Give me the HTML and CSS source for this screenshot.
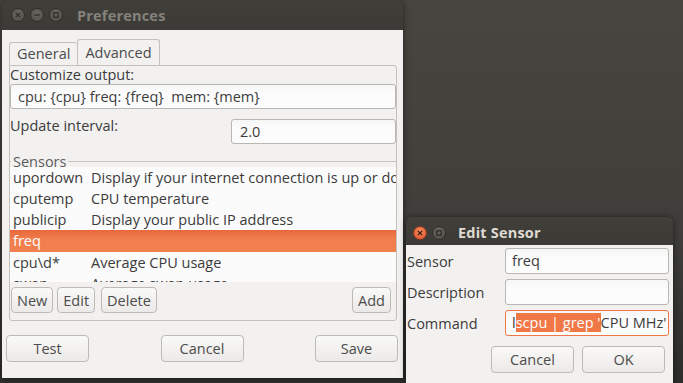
FILE: index.html
```html
<!DOCTYPE html>
<html>
<head>
<meta charset="utf-8">
<link rel="stylesheet" href="styles.css">
</head>
<body>
<div class="desktop">
  <div class="window prefs">
    <div class="titlebar">
      <div class="wbtns">
        <span class="wb"><svg viewBox="0 0 14 14"><path d="M4.5 4.5l5 5M9.5 4.5l-5 5"/></svg></span>
        <span class="wb"><svg viewBox="0 0 14 14"><path d="M4 7h6"/></svg></span>
        <span class="wb"><svg viewBox="0 0 14 14"><rect x="4.5" y="4.5" width="5" height="5"/></svg></span>
      </div>
      <div class="title">Preferences</div>
    </div>
    <div class="body">
      <div class="tabs">
        <div class="tab">General</div>
        <div class="tab active">Advanced</div>
      </div>
      <div class="panel">
        <div class="label">Customize output:</div>
        <div class="entry wide">cpu: {cpu} freq: {freq}&nbsp; mem: {mem}</div>
        <div class="interval">
          <span class="label">Update interval:</span>
          <div class="entry spin">2.0</div>
        </div>
        <div class="frame">
          <div class="legend"><span>Sensors</span></div>
          <div class="list">
            <div class="lrow"><span class="c1">upordown</span><span class="c2">Display if your internet connection is up or down</span></div>
            <div class="lrow"><span class="c1">cputemp</span><span class="c2">CPU temperature</span></div>
            <div class="lrow"><span class="c1">publicip</span><span class="c2">Display your public IP address</span></div>
            <div class="lrow sel"><span class="c1">freq</span><span class="c2"></span></div>
            <div class="lrow"><span class="c1">cpu\d*</span><span class="c2">Average CPU usage</span></div>
            <div class="lrow"><span class="c1">swap</span><span class="c2">Average swap usage</span></div>
          </div>
          <div class="listbtns">
            <button class="btn sm">New</button>
            <button class="btn sm">Edit</button>
            <button class="btn sm">Delete</button>
            <span class="spacer"></span>
            <button class="btn sm">Add</button>
          </div>
        </div>
      </div>
      <div class="actions">
        <button class="btn big">Test</button>
        <button class="btn big">Cancel</button>
        <button class="btn big">Save</button>
      </div>
    </div>
  </div>

  <div class="window edit">
    <div class="titlebar">
      <div class="wbtns">
        <span class="wb closeact"><svg viewBox="0 0 14 14"><path d="M4.5 4.5l5 5M9.5 4.5l-5 5"/></svg></span>
        <span class="wb"><svg viewBox="0 0 14 14"><rect x="4.5" y="4.5" width="5" height="5"/></svg></span>
      </div>
      <div class="title">Edit Sensor</div>
    </div>
    <div class="body">
      <div class="form">
        <span class="flabel">Sensor</span><div class="entry">freq</div>
        <span class="flabel">Description</span><div class="entry"></div>
        <span class="flabel">Command</span><div class="entry focus">l<span class="hl">scpu | grep '</span>CPU MHz'</div>
      </div>
      <div class="dlgbtns">
        <button class="btn big">Cancel</button>
        <button class="btn big">OK</button>
      </div>
    </div>
  </div>
</div>
</body>
</html>
```

FILE: styles.css
```css
* { box-sizing: border-box; }
html, body { margin: 0; padding: 0; }
body {
  width: 683px; height: 383px; overflow: hidden;
  font-family: "Open Sans", "Noto Sans", sans-serif;
  font-size: 14.5px;
  color: #3c3c3c;
}
.desktop {
  position: relative;
  width: 683px; height: 383px;
  background: linear-gradient(#46453f, #3f3e3a 60%, #2e2e2d 98%);
}
.window {
  position: absolute;
  display: flex; flex-direction: column;
  box-shadow: 0 0 6px rgba(0,0,0,0.5);
  border-radius: 6px 6px 0 0;
}
.prefs { left: 2px; top: 0; width: 401px; height: 378px; }
.edit { left: 406px; top: 217px; width: 267px; height: 170px; }

.titlebar {
  height: 30px; flex: none;
  display: flex; align-items: center;
  background: linear-gradient(#403f3a, #3b3a36);
  border-radius: 6px 6px 0 0;
  padding-left: 9px;
}
.edit .titlebar { height: 28px; padding: 3px 0 0 7px; }
.wbtns { display: flex; gap: 5px; }
.wb {
  width: 14px; height: 14px; border-radius: 50%;
  background: radial-gradient(circle at 50% 35%, #67665f, #4d4c47);
  border: 1px solid #2f2e2b;
  display: flex;
}
.wb svg { width: 100%; height: 100%; fill: none; stroke: #2c2b28; stroke-width: 1.5; }
.wb.closeact { background: radial-gradient(circle at 50% 35%, #f58a5e, #d9532a); border-color: #8e3b1f; }
.wb.closeact svg { stroke: #3a1a0e; }
.title {
  font-weight: bold; font-size: 14.5px;
  color: #85827b; margin-left: 14px; letter-spacing: 0.2px;
}
.edit .title { color: #dfdbd2; margin-left: 12px; }

.body { flex: 1; background: #f2f1f0; display: flex; flex-direction: column; }

.prefs .body { padding: 0 5px 0 4px; }
.tabs { display: flex; align-items: flex-end; height: 35px; padding-left: 3px; }
.tab {
  height: 23px; padding: 0 7px 0 7px;
  border: 1px solid #c4c1bb; border-bottom: none;
  border-radius: 3px 3px 0 0;
  line-height: 22px;
  color: #4c4c4c;
}
.tab:first-child { border-right: none; }
.tab.active { height: 26px; line-height: 25px; background: #f2f1f0; padding: 0 7px 0 7px; }

.panel {
  border: 1px solid #c4c1bb;
  border-radius: 0 3px 3px 3px;
  height: 256px;
  margin: 0 1px 0 3px;
  padding: 0;
  display: flex; flex-direction: column;
}
.label { line-height: 17px; padding-left: 0; }
.entry {
  height: 25px;
  background: linear-gradient(#f6f6f6, #fcfcfc 40%);
  border: 1px solid #b9b7b3;
  border-radius: 3px;
  padding: 0 7px;
  line-height: 23px;
  white-space: nowrap; overflow: hidden;
}
.entry.wide { margin-top: 1px; }
.interval {
  display: flex; justify-content: space-between; align-items: flex-start;
  margin-top: 10px;
}
.interval .label { margin-top: -2px; }
.spin { width: 165px; padding-left: 8px; }

.frame { margin-top: 11px; display: flex; flex-direction: column; }
.legend { display: flex; align-items: center; height: 12px; }
.legend span { padding: 0 2px 0 2px; color: #5d5d5d; }
.legend::after { content: ""; flex: 1; border-top: 1px solid #c9c6c1; margin-top: 1px; }
.legend::before { content: ""; width: 1px; border-top: 1px solid #c9c6c1; margin-top: 1px; }
.list {
  margin-top: 0;
  background: #fbfbfb;
  height: 115px; overflow: hidden;
}
.lrow { display: flex; height: 21px; line-height: 21px; white-space: nowrap; }
.lrow .c1 { width: 81px; padding-left: 3px; flex: none; }
.lrow .c2 { padding-left: 0; }
.lrow.sel { height: 22px; background: linear-gradient(#e8683a, #f07d4c 40%, #f28150); color: #fff; }
.listbtns { display: flex; gap: 4px; padding: 5px 5px 0 1px; }
.listbtns .btn:nth-child(3) { margin-left: 2px; }
.spacer { flex: 1; }

.btn {
  font: inherit; color: #4c4c4c;
  border: 1px solid #bdbab5;
  border-radius: 4px;
  background: linear-gradient(#f9f9f8, #eceae8);
  padding: 0;
}
.btn.sm { height: 26px; padding: 0 5px; }
.btn.big { width: 83px; height: 27px; }

.actions {
  display: flex; justify-content: space-between;
  padding: 14px 0 0 0;
}

.edit .body { padding: 3px 4px 0 1px; }
.form {
  display: grid; grid-template-columns: 98px 1fr;
  row-gap: 5px; align-items: center;
}
.form .entry { height: 26px; line-height: 24px; padding: 0 6px; }
.flabel { padding-left: 0; }
.entry.focus { border-color: #f07746; }
.hl { background: #f07746; color: #fff; }
.dlgbtns { display: flex; justify-content: flex-end; gap: 8px; padding: 10px 4px 0 0; }
```
